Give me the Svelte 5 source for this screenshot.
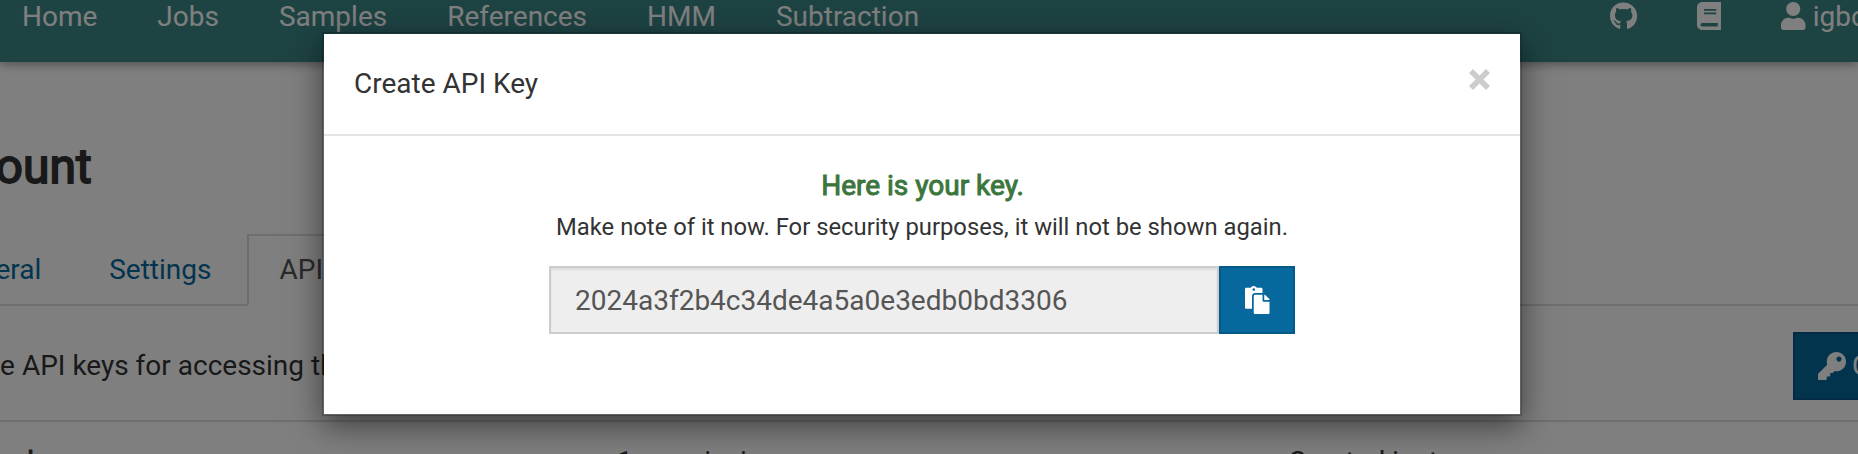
<script>
  const links = ['Home', 'Jobs', 'Samples', 'References', 'HMM', 'Subtraction'];
  const apiKey = '2024a3f2b4c34de4a5a0e3edb0bd3306';
  const icons = {
    github: {
      w: 496,
      d: 'M165.900 397.400c0 2-2.300 3.600-5.200 3.600-3.300.3-5.600-1.300-5.600-3.600 0-2 2.300-3.600 5.200-3.600 3-.3 5.600 1.300 5.600 3.600zm-31.100-4.500c-.7 2 1.300 4.300 4.300 4.900 2.600 1 5.600 0 6.200-2s-1.300-4.300-4.300-5.200c-2.600-.7-5.500.3-6.200 2.300zm44.200-1.700c-2.900.7-4.900 2.600-4.600 4.900.3 2 2.900 3.300 5.900 2.600 2.900-.7 4.900-2.600 4.600-4.600-.3-1.900-3-3.200-5.900-2.900zM244.800 8C106.100 8 0 113.300 0 252c0 110.900 69.800 205.800 169.500 239.200 12.800 2.300 17.300-5.600 17.300-12.100 0-6.200-.3-40.400-.3-61.400 0 0-70 15-84.700-29.800 0 0-11.400-29.100-27.800-36.600 0 0-22.900-15.700 1.600-15.400 0 0 24.900 2 38.600 25.800 21.900 38.600 58.600 27.500 72.900 20.900 2.300-16 8.800-27.100 16-33.700-55.900-6.200-112.300-14.300-112.300-110.500 0-27.500 7.600-41.300 23.600-58.900-2.600-6.500-11.100-33.300 2.600-67.900 20.900-6.500 69 27 69 27 20-5.600 41.500-8.500 62.800-8.500s42.800 2.900 62.800 8.500c0 0 48.100-33.600 69-27 13.700 34.700 5.200 61.400 2.600 67.900 16 17.700 25.800 31.500 25.800 58.900 0 96.500-58.900 104.200-114.800 110.500 9.200 7.900 17 22.900 17 46.400 0 33.700-.3 75.400-.3 83.600 0 6.500 4.600 14.400 17.300 12.100C428.200 457.800 496 362.900 496 252 496 113.300 383.500 8 244.800 8zM97.200 352.900c-1.300 1-1 3.300.7 5.200 1.600 1.600 3.900 2.300 5.200 1 1.300-1 1-3.300-.7-5.200-1.600-1.600-3.900-2.300-5.200-1zm-10.800-8.100c-.7 1.300.3 2.900 2.300 3.900 1.600 1 3.600.7 4.300-.7.7-1.300-.3-2.900-2.300-3.900-2-.6-3.600-.3-4.300.7zm32.400 35.600c-1.600 1.300-1 4.300 1.300 6.200 2.300 2.300 5.200 2.600 6.500 1 1.300-1.300.7-4.300-1.300-6.200-2.200-2.300-5.200-2.600-6.500-1zm-11.400-14.700c-1.600 1-1.600 3.600 0 5.900 1.600 2.300 4.300 3.300 5.600 2.300 1.600-1.300 1.600-3.900 0-6.200-1.400-2.300-4-3.300-5.600-2z'
    },
    book: {
      w: 448,
      d: 'M448 360V24c0-13.300-10.700-24-24-24H96C43 0 0 43 0 96v320c0 53 43 96 96 96h328c13.300 0 24-10.700 24-24v-16c0-7.500-3.500-14.300-8.900-18.700-4.200-15.400-4.200-59.300 0-74.700 5.400-4.300 8.900-11.100 8.900-18.600zM128 134c0-3.300 2.700-6 6-6h212c3.300 0 6 2.700 6 6v20c0 3.300-2.700 6-6 6H134c-3.300 0-6-2.700-6-6v-20zm0 64c0-3.300 2.700-6 6-6h212c3.300 0 6 2.700 6 6v20c0 3.300-2.700 6-6 6H134c-3.300 0-6-2.700-6-6v-20zm253.400 250H96c-17.700 0-32-14.300-32-32 0-17.600 14.400-32 32-32h285.400c-1.900 17.100-1.900 46.900 0 64z'
    },
    user: {
      w: 448,
      d: 'M224 256c70.700 0 128-57.300 128-128S294.700 0 224 0 96 57.300 96 128s57.300 128 128 128zm89.600 32h-16.700c-22.200 10.200-46.900 16-72.900 16s-50.600-5.800-72.900-16h-16.700C60.200 288 0 348.200 0 422.400V464c0 26.500 21.500 48 48 48h352c26.500 0 48-21.500 48-48v-41.600c0-74.200-60.200-134.400-134.400-134.400z'
    },
    key: {
      w: 512,
      d: 'M512 176.001C512 273.203 433.202 352 336 352c-11.220 0-22.190-1.062-32.827-3.069l-24.012 27.014A23.999 23.999 0 0 1 261.223 384H224v40c0 13.255-10.745 24-24 24h-40v40c0 13.255-10.745 24-24 24H24c-13.255 0-24-10.745-24-24v-78.059c0-6.365 2.529-12.470 7.029-16.971l161.802-161.802C163.108 213.814 160 195.271 160 176 160 78.798 238.797.001 335.999 0 433.488-.001 512 78.511 512 176.001zM336 128c0 26.510 21.490 48 48 48s48-21.490 48-48-21.490-48-48-48-48 21.490-48 48z'
    },
    paste: {
      w: 512,
      d: 'M128 184c0-30.879 25.122-56 56-56h136V56c0-13.255-10.745-24-24-24h-80.610C204.306 12.890 183.637 0 160 0s-44.306 12.890-55.390 32H24C10.745 32 0 42.745 0 56v336c0 13.255 10.745 24 24 24h104V184zm32-144c13.255 0 24 10.745 24 24s-10.745 24-24 24-24-10.745-24-24 10.745-24 24-24zm184 248h104v200c0 13.255-10.745 24-24 24H184c-13.255 0-24-10.745-24-24V184c0-13.255 10.745-24 24-24h136v104c0 13.200 10.800 24 24 24zm104-38.059V256h-96v-96h6.059a24 24 0 0 1 16.970 7.029l65.941 65.941a24.002 24.002 0 0 1 7.030 16.971z'
    }
  };
</script>

{#snippet icon(name)}
  <svg class="icon" viewBox="0 0 {icons[name].w} 512" width={(icons[name].w * 28) / 512} height="28" aria-hidden="true">
    <path d={icons[name].d} fill="currentColor" />
  </svg>
{/snippet}

<div class="app">
  <nav>
    <div class="links">
      {#each links as link}<span>{link}</span>{/each}
    </div>
    <div class="tools">
      <span>{@render icon('github')}</span>
      <span>{@render icon('book')}</span>
      <span class="user">{@render icon('user')}igboyes</span>
    </div>
  </nav>

  <main>
    <h1>Account</h1>
    <div class="tabs">
      <span class="tab">General</span>
      <span class="tab">Settings</span>
      <span class="tab active">API</span>
    </div>
    <div class="intro">
      <span>Manage API keys for accessing the Virtool API.</span>
      <button class="create">{@render icon('key')}Create</button>
    </div>
    <div class="row">
      <strong>Upload</strong>
      <span>1 permission</span>
      <span>Created just now</span>
    </div>
  </main>

  <div class="backdrop"></div>

  <div class="modal" role="dialog" aria-label="Create API Key">
    <header>
      <span>Create API Key</span>
      <button class="close" aria-label="Close">
        <svg viewBox="0 0 21 21" width="21" height="21"><path d="M2 2 19 19M19 2 2 19" stroke="#ccc" stroke-width="5.600" /></svg>
      </button>
    </header>
    <section>
      <strong class="success">Here is your key.</strong>
      <small>Make note of it now. For security purposes, it will not be shown again.</small>
      <div class="group">
        <div class="field">{apiKey}</div>
        <button class="copy" aria-label="Copy">{@render icon('paste')}</button>
      </div>
    </section>
  </div>
</div>

<style>
  :global(body) {
    margin: 0;
    overflow: hidden;
  }
  .app, .app * {
    box-sizing: border-box;
  }
  .app {
    position: relative;
    height: 454px;
    overflow: hidden;
    background: #fff;
    color: #333;
    font: 28px/40px Roboto, sans-serif;
  }
  button {
    font: inherit;
    border-radius: 0;
  }
  .icon {
    display: block;
    flex: none;
  }
  nav {
    display: flex;
    justify-content: space-between;
    height: 62px;
    padding-left: 22px;
    background: #3c8786;
    color: #fff;
    box-shadow: 0 2px 10px rgba(0, 0, 0, 0.4);
  }
  .links, .tools {
    display: flex;
    gap: 60px;
    height: 40px;
    margin-top: -3px;
  }
  .tools {
    width: 248.5px;
    white-space: nowrap;
  }
  .tools span {
    display: flex;
    flex: none;
  }
  .tools .icon {
    margin-top: 4.5px;
  }
  .user {
    gap: 7px;
  }
  main {
    margin-left: -86px;
  }
  h1 {
    margin: 0;
    padding-top: 78px;
    font-size: 48px;
    line-height: 53px;
    font-weight: 400;
    -webkit-text-stroke: 1.8px;
  }
  .tabs {
    display: flex;
    gap: 4px;
    height: 72px;
    margin-top: 41px;
    border-bottom: 2px solid #ddd;
    color: #07689d;
  }
  .tab {
    height: 72px;
    padding: 14px 30px;
    border: 2px solid transparent;
  }
  .active {
    border-color: #ddd;
    border-bottom-color: #fff;
    background: #fff;
    color: #555;
  }
  .intro {
    display: flex;
    align-items: center;
    justify-content: space-between;
    padding: 26px 0 20px;
    border-bottom: 2px solid #ddd;
  }
  .create {
    display: flex;
    align-items: center;
    gap: 6px;
    width: 170px;
    height: 68px;
    margin-right: -105px;
    padding: 0 23px;
    background: #07689d;
    border: 2px solid #06578a;
    color: #fff;
  }
  .row {
    display: grid;
    grid-template-columns: 671px 671px 1fr;
    height: 80px;
    padding: 20px 32px;
  }
  strong {
    font-weight: 400;
    -webkit-text-stroke: 1px;
  }
  .backdrop {
    position: absolute;
    inset: 0;
    background: rgba(0, 0, 0, 0.5);
  }
  .modal {
    position: absolute;
    top: 32px;
    left: 322px;
    width: 1200px;
    height: 384px;
    border: 2px solid rgba(0, 0, 0, 0.2);
    background: #fff;
    background-clip: padding-box;
    box-shadow: 0 10px 30px rgba(0, 0, 0, 0.5);
  }
  header {
    display: flex;
    justify-content: space-between;
    height: 102px;
    padding: 30px;
    border-bottom: 2px solid #e5e5e5;
  }
  .close {
    display: flex;
    height: 21px;
    margin-top: 5px;
    padding: 0;
    border: 0;
    background: none;
  }
  section {
    display: flex;
    flex-direction: column;
    align-items: center;
    padding: 30px;
  }
  .success {
    padding-left: 1px;
    color: #3c763d;
  }
  small {
    margin-top: 4px;
    font-size: 23.8px;
    line-height: 34px;
  }
  .group {
    display: flex;
    width: 746px;
    margin-top: 22px;
  }
  .field {
    flex: 1;
    height: 68px;
    padding: 13px 24px 11px;
    border: 2px solid #ccc;
    background: #eee;
    color: #555;
    box-shadow: inset 0 2px 2px rgba(0, 0, 0, 0.075);
  }
  .copy {
    display: flex;
    align-items: center;
    width: 76px;
    height: 68px;
    padding: 0 0 0 24px;
    background: #07689d;
    border: 2px solid #065a88;
    color: #fff;
  }
</style>
